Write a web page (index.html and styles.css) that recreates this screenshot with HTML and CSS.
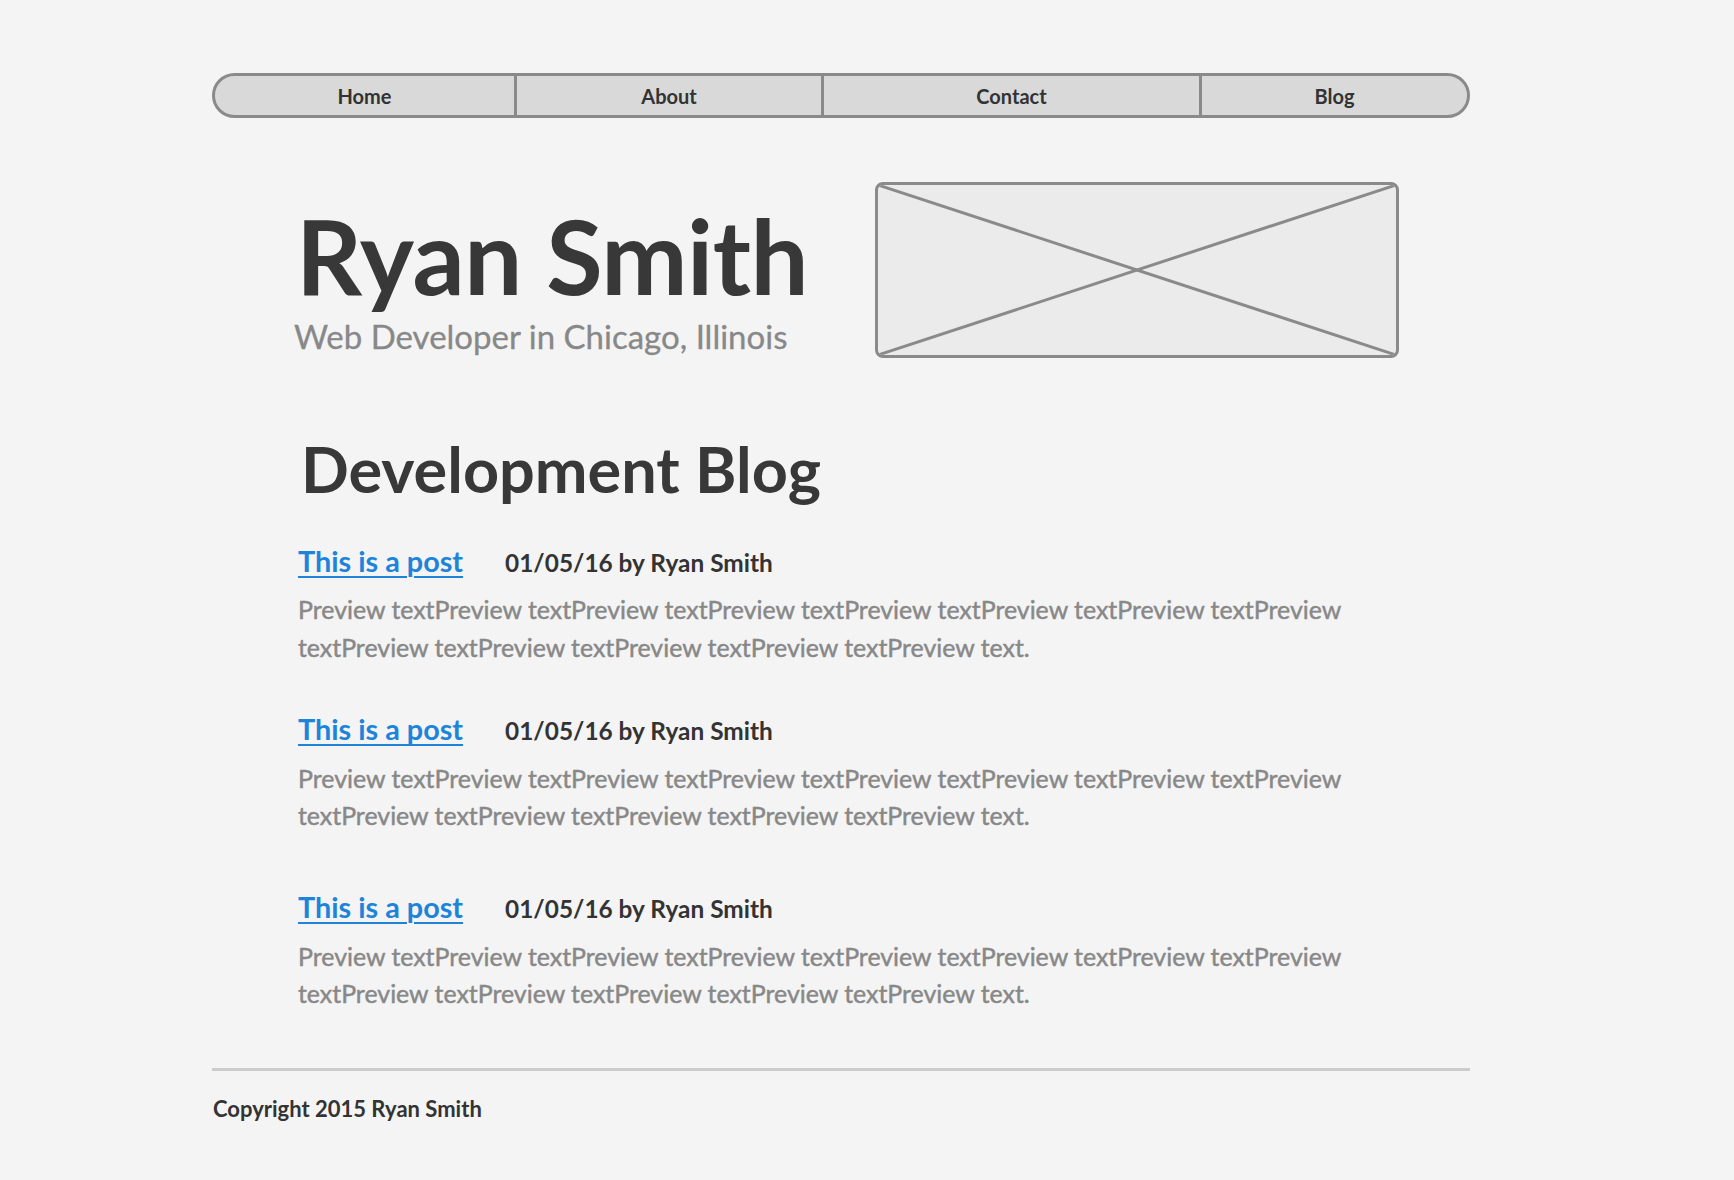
FILE: index.html
```html
<!DOCTYPE html>
<html lang="en">
<head>
<meta charset="utf-8">
<title>Ryan Smith</title>
<link rel="stylesheet" href="styles.css">
</head>
<body>
<div class="page">
  <nav class="nav">
    <a class="nav-item home" href="#">Home</a>
    <a class="nav-item about" href="#">About</a>
    <a class="nav-item contact" href="#">Contact</a>
    <a class="nav-item blog" href="#">Blog</a>
  </nav>

  <main class="content">
    <header class="hero">
      <div class="hero-text">
        <h1 class="name">Ryan Smith</h1>
        <p class="tagline">Web Developer in Chicago, Illinois</p>
      </div>
      <div class="placeholder">
        <svg class="placeholder-x" viewBox="0 0 100 100" preserveAspectRatio="none">
          <line x1="0" y1="0" x2="100" y2="100" vector-effect="non-scaling-stroke"/>
          <line x1="100" y1="0" x2="0" y2="100" vector-effect="non-scaling-stroke"/>
        </svg>
      </div>
    </header>

    <h2 class="section-title">Development Blog</h2>

    <article class="post post-1">
      <div class="post-head">
        <a class="post-link" href="#">This is a post</a>
        <span class="post-meta">01/05/16 by Ryan Smith</span>
      </div>
      <p class="post-preview">Preview textPreview textPreview textPreview textPreview textPreview textPreview textPreview textPreview textPreview textPreview textPreview textPreview text.</p>
    </article>

    <article class="post post-2">
      <div class="post-head">
        <a class="post-link" href="#">This is a post</a>
        <span class="post-meta">01/05/16 by Ryan Smith</span>
      </div>
      <p class="post-preview">Preview textPreview textPreview textPreview textPreview textPreview textPreview textPreview textPreview textPreview textPreview textPreview textPreview text.</p>
    </article>

    <article class="post post-3">
      <div class="post-head">
        <a class="post-link" href="#">This is a post</a>
        <span class="post-meta">01/05/16 by Ryan Smith</span>
      </div>
      <p class="post-preview">Preview textPreview textPreview textPreview textPreview textPreview textPreview textPreview textPreview textPreview textPreview textPreview textPreview text.</p>
    </article>
  </main>

  <footer class="footer">
    <p class="copyright">Copyright 2015 Ryan Smith</p>
  </footer>
</div>
</body>
</html>
```

FILE: styles.css
```css
* { box-sizing: border-box; }

html, body {
  margin: 0;
  padding: 0;
  background: #f4f4f4;
}

body {
  font-family: Lato, "Open Sans", "Noto Sans", sans-serif;
  color: #383838;
}

.page {
  width: 1258px;
  margin-left: 212px;
  padding-top: 73px;
  padding-bottom: 40px;
}

/* ---------- nav ---------- */
.nav {
  display: grid;
  grid-template-columns: 299px 307px 378px 1fr;
  height: 45px;
  border: 3px solid #8a8a8a;
  border-radius: 24px;
  background: #d9d9d9;
  overflow: hidden;
}

.nav-item {
  display: flex;
  align-items: center;
  justify-content: center;
  font-size: 20px;
  font-weight: 700;
  color: #333;
  text-decoration: none;
  border-left: 3px solid #8a8a8a;
}

.nav-item.home { border-left: none; }

/* ---------- content ---------- */
.content {
  padding: 0 86px;
}

.hero {
  display: flex;
  align-items: flex-start;
  margin-top: 64px;
}

.hero-text {
  flex: none;
  width: 577px;
  margin-top: 22px;
}

.name {
  margin: 0 0 0 -2px;
  font-size: 103px;
  line-height: 1;
  font-weight: 700;
  color: #383838;
  letter-spacing: -0.5px;
}

.tagline {
  margin: 10px 0 0 -4px;
  font-size: 33px;
  line-height: 1.2;
  color: #888;
  -webkit-text-stroke: 0.3px #888;
}

.placeholder {
  flex: none;
  width: 524px;
  height: 176px;
  border: 3px solid #8a8a8a;
  border-radius: 8px;
  background: #ebebeb;
  overflow: hidden;
}

.placeholder-x {
  display: block;
  width: 100%;
  height: 100%;
}

.placeholder-x line {
  stroke: #8a8a8a;
  stroke-width: 3;
}

.section-title {
  margin: 73px 0 0 3px;
  font-size: 63px;
  line-height: 1.2;
  font-weight: 700;
  color: #383838;
}

/* ---------- posts ---------- */
.post-1 { margin-top: 37px; }
.post-2 { margin-top: 46px; }
.post-3 { margin-top: 55px; }

.post-head {
  display: flex;
  align-items: baseline;
  gap: 42px;
  line-height: 1.2;
}

.post-link {
  font-size: 28.8px;
  font-weight: 700;
  color: #1d84da;
  text-decoration: underline;
  text-decoration-thickness: 2px;
  text-underline-offset: 4px;
}

.post-meta {
  font-size: 24.4px;
  font-weight: 700;
  color: #333;
}

.post-preview {
  margin: 13px 0 0;
  font-size: 24.9px;
  line-height: 37.6px;
  color: #888;
  -webkit-text-stroke: 0.45px #888;
  max-width: 1080px;
}

/* ---------- footer ---------- */
.footer {
  margin-top: 55px;
  border-top: 3px solid #cccccc;
}

.copyright {
  margin: 25px 0 0 1px;
  font-size: 22px;
  line-height: 1.2;
  font-weight: 700;
  color: #333;
}
```
